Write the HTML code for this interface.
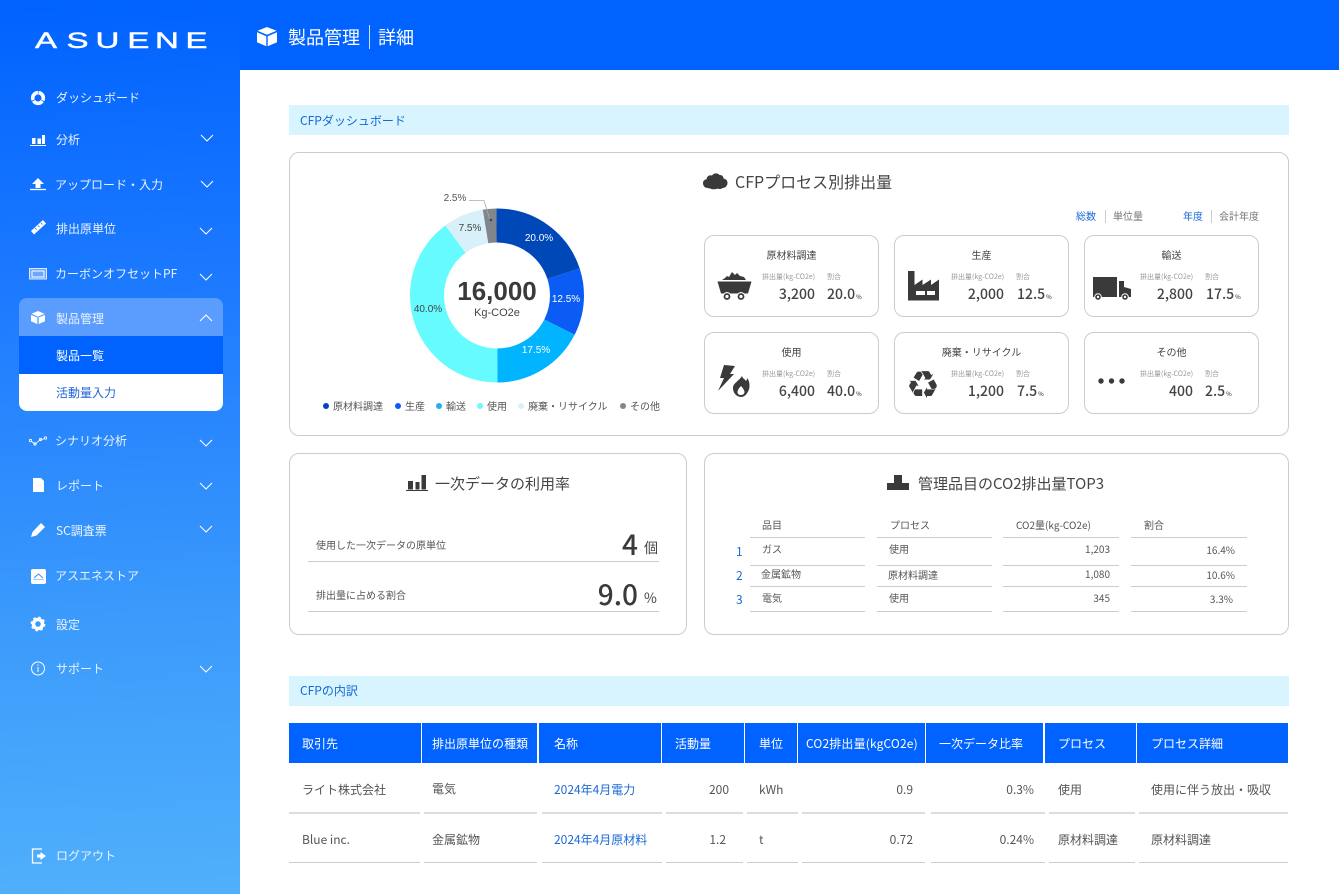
<!DOCTYPE html>
<html lang="ja"><head><meta charset="utf-8"><title>ASUENE</title>
<style>
*{box-sizing:border-box}
html,body{margin:0;padding:0}
body{width:1339px;height:894px;overflow:hidden;position:relative;background:#fff;font-family:"Liberation Sans","Noto Sans CJK JP",sans-serif;color:#444}
.t,.r,.c{position:absolute;line-height:20px;height:20px;white-space:nowrap;font-family:"Noto Sans CJK JP",sans-serif}
.r{text-align:right;width:200px}
.c{text-align:center}
.a{position:absolute}
#side{position:absolute;left:0;top:0;width:240px;height:894px;background:linear-gradient(178deg,#0062ff 0%,#1f7cff 35%,#3c9bfb 70%,#50b0fb 100%)}
.s{font-size:12px;color:#e9f3ff;margin-top:1px}
.card{position:absolute;border:1px solid #ccc;border-radius:10px;background:#fff}
.ln{position:absolute;height:1px;background:#ccc}
.lab{font-size:7px;color:#999}
.val{font-size:14px;font-weight:500;color:#444}
.ttl{font-size:10px;color:#444}
.th{position:absolute;top:723px;height:40px;background:#0062ff}
.h{font-size:12px;color:#fff;top:734px}
.d{font-size:12px;color:#555;margin-top:1px}
.b{color:#1a6ad8}
.p{font-size:10px;font-family:"Liberation Sans",sans-serif}
.leg{font-size:10px;color:#555;top:396px}
.dot{position:absolute;width:6px;height:6px;border-radius:3px;top:403px}
.m{font-size:10px;color:#555}
</style></head><body>

<div id="side"></div>
<div class="a" style="left:240px;top:0;width:1099px;height:70px;background:#0062ff"></div>

<svg class="a" style="left:0;top:0" width="240" height="70"><text transform="translate(34 48) scale(1.5 1)" x="0.7 21.7 41 62.300 80.700 101" fill="#fff" stroke="#fff" stroke-width=".45" font-family="Liberation Sans" font-size="22">ASUENE</text></svg>

<!-- active box -->
<div class="a" style="left:19px;top:298px;width:204px;height:38px;background:#5b9dff;border-radius:8px 8px 0 0"></div>
<div class="a" style="left:19px;top:336px;width:204px;height:38px;background:#0062ff"></div>
<div class="a" style="left:19px;top:374px;width:204px;height:37px;background:#fff;border-radius:0 0 8px 8px"></div>

<div class="t s" style="left:56px;top:87px">ダッシュボード</div>
<div class="t s" style="left:56px;top:129px">分析</div>
<div class="t s" style="left:55px;top:174px">アップロード・入力</div>
<div class="t s" style="left:56px;top:218px">排出原単位</div>
<div class="t s" style="left:55px;top:263px">カーボンオフセットPF</div>
<div class="t s" style="left:56px;top:308px">製品管理</div>
<div class="t s" style="left:56px;top:345px;color:#fff">製品一覧</div>
<div class="t s" style="left:56px;top:382px;color:#1f66d6">活動量入力</div>
<div class="t s" style="left:55px;top:430px">シナリオ分析</div>
<div class="t s" style="left:56px;top:475px">レポート</div>
<div class="t s" style="left:56px;top:520px">SC調査票</div>
<div class="t s" style="left:55px;top:565px">アスエネストア</div>
<div class="t s" style="left:56px;top:614px">設定</div>
<div class="t s" style="left:56px;top:658px">サポート</div>
<div class="t s" style="left:56px;top:845px">ログアウト</div>

<svg class="a" style="left:0;top:0" width="240" height="894" fill="none">
<g stroke="#fff" stroke-width="1.1">
<path d="M201 135l6 6 6-6M201 181l6 6 6-6M200 228l6 6 6-6M200 274l6 6 6-6M200 321l6-6 6 6M200 440l6 6 6-6M200 483l6 6 6-6M200 526l6 6 6-6M200 666l6 6 6-6"/>
</g>
<!-- dashboard -->
<circle cx="38" cy="98" r="5.300" stroke="#fff" stroke-width="3.600" stroke-dasharray="10.300 .8" transform="rotate(-85 38 98)"/>
<!-- bars -->
<path d="M32 138h3.500v6H32zM37.500 138.500H41v5.500h-3.500zM42 135h3v9h-3z" fill="#fff"/><path d="M30 145.500h16" stroke="#fff"/>
<!-- upload -->
<path d="M38 178l6 6h-3.500v4h-5v-4H32z" fill="#fff"/><path d="M30 189.500h16" stroke="#fff" stroke-width="1.300"/>
<!-- ruler -->
<path d="M31 231l12-11 3 3.500-12 11z" fill="#fff"/><path d="M35 228l1.500 1.500M38 225.500l1.500 1.500M41 223l1.500 1.500" stroke="#4d8ff0"/>
<!-- carbon card -->
<rect x="29.500" y="268.500" width="17" height="10.500" stroke="#dbe9ff" fill="#6ea6ff"/><rect x="32" y="271" width="12" height="6" stroke="#fff"/>
<!-- cube -->
<path d="M38 311l6.500 2.800-6.500 2.800-6.500-2.800z" fill="#fff"/><path d="M31 315v6.200l6.300 2.800v-6.600zM45 315v6.200l-6.300 2.800v-6.600z" fill="#fff"/>
<!-- scenario -->
<path d="M31 441l4 3 5-4 5-1.500" stroke="#fff" stroke-width=".8"/><circle cx="30.500" cy="440.500" r="1.200" stroke="#fff" stroke-width=".8"/><circle cx="35" cy="444" r="1.200" stroke="#fff" stroke-width=".8"/><circle cx="40.500" cy="439.500" r="1.200" stroke="#fff" stroke-width=".8"/><circle cx="45.500" cy="438" r="1.200" stroke="#fff" stroke-width=".8"/>
<!-- doc -->
<path d="M33 478h8l3 3v11H33z" fill="#fff"/>
<!-- pencil -->
<path d="M31 537l1.500-5 8.500-9 4 4-8.500 8.500z" fill="#fff"/>
<!-- store -->
<rect x="31" y="569" width="15" height="15" rx="2" fill="#fff"/><path d="M34 578l4.500-4 4.500 4" stroke="#3b8df5"/><path d="M33 579.500h11" stroke="#a7ccfa"/>
<!-- gear -->
<circle cx="38" cy="624" r="4.500" stroke="#fff" stroke-width="3.500"/><circle cx="38" cy="624" r="6.200" stroke="#fff" stroke-width="2.400" stroke-dasharray="2.400 2.470"/>
<!-- info -->
<circle cx="38" cy="668.500" r="6.500" stroke="#fff"/><path d="M38 667v5M38 664.500v1.300" stroke="#fff"/>
<!-- logout -->
<path d="M42 849h-9.500v14H42" stroke="#fff" stroke-width="1.300"/><path d="M37 854.500h3.500V852l5.500 4-5.500 4v-2.500H37z" fill="#fff"/>
</svg>

<!-- header -->
<svg class="a" style="left:257px;top:26px" width="21" height="21"><path d="M10 1l9.500 3.800-9.500 4-9.500-4z" fill="#fff"/><path d="M0 6.300v10l9.300 4V10.300zM20 6.300v10l-9.300 4V10.300z" fill="#fff"/></svg>
<div class="t" style="left:288px;top:27px;font-size:18px;color:#fff">製品管理</div>
<div class="a" style="left:369px;top:25px;width:1px;height:24px;background:#cfe1ff"></div>
<div class="t" style="left:378px;top:27px;font-size:18px;color:#fff">詳細</div>

<!-- section bars -->
<div class="a" style="left:289px;top:105px;width:1000px;height:30px;background:#d8f4ff"></div>
<div class="t" style="left:300px;top:111px;font-size:12px;color:#1668d8">CFPダッシュボード</div>
<div class="a" style="left:289px;top:676px;width:1000px;height:30px;background:#d8f4ff"></div>
<div class="t" style="left:300px;top:681px;font-size:12px;color:#1668d8">CFPの内訳</div>

<!-- cards -->
<div class="card" style="left:289px;top:152px;width:1000px;height:284px"></div>
<div class="card" style="left:289px;top:453px;width:398px;height:182px"></div>
<div class="card" style="left:704px;top:453px;width:585px;height:182px"></div>

<!-- donut -->
<svg class="a" style="left:400px;top:190px" width="200" height="200" fill="none">
<g transform="rotate(-90 97 105.500)" stroke-width="34">
<circle cx="97" cy="105.500" r="70" pathLength="100" stroke="#0047b8" stroke-dasharray="20 80"/>
<circle cx="97" cy="105.500" r="70" pathLength="100" stroke="#0a5cf5" stroke-dasharray="12.500 87.500" stroke-dashoffset="-20"/>
<circle cx="97" cy="105.500" r="70" pathLength="100" stroke="#00b4ff" stroke-dasharray="17.500 82.500" stroke-dashoffset="-32.500"/>
<circle cx="97" cy="105.500" r="70" pathLength="100" stroke="#66fbff" stroke-dasharray="40 60" stroke-dashoffset="-50"/>
<circle cx="97" cy="105.500" r="70" pathLength="100" stroke="#d8f0fa" stroke-dasharray="7.500 92.500" stroke-dashoffset="-90"/>
<circle cx="97" cy="105.500" r="70" pathLength="100" stroke="#80868b" stroke-dasharray="2.500 97.500" stroke-dashoffset="-97.500"/>
</g>
<path d="M69 10.500h15l5.500 18" stroke="#aaa" stroke-width=".8"/><circle cx="91" cy="30" r="1.300" fill="#444"/>
</svg>
<div class="c p" style="left:519px;width:40px;top:229px;color:#fff">20.0%</div>
<div class="c p" style="left:546px;width:40px;top:290px;color:#fff">12.5%</div>
<div class="c p" style="left:516px;width:40px;top:341px;color:#fff">17.5%</div>
<div class="c p" style="left:408px;width:40px;top:300px;color:#444">40.0%</div>
<div class="c p" style="left:450px;width:40px;top:219px;color:#444">7.5%</div>
<div class="c p" style="left:435px;width:40px;top:189px;color:#555">2.5%</div>
<div class="c" style="left:447px;width:100px;top:281px;font:bold 26px/20px 'Liberation Sans',sans-serif;color:#3a3a3a">16,000</div>
<div class="c" style="left:447px;width:100px;top:303px;font:11px/20px 'Liberation Sans',sans-serif;color:#444">Kg-CO2e</div>

<!-- legend -->
<i class="dot" style="left:323px;background:#0047b8"></i><div class="t leg" style="left:333px">原材料調達</div>
<i class="dot" style="left:395px;background:#0a5cf5"></i><div class="t leg" style="left:405px">生産</div>
<i class="dot" style="left:436px;background:#1fb0f5"></i><div class="t leg" style="left:446px">輸送</div>
<i class="dot" style="left:477px;background:#66fbff"></i><div class="t leg" style="left:487px">使用</div>
<i class="dot" style="left:518px;background:#d8f0fa"></i><div class="t leg" style="left:528px">廃棄・リサイクル</div>
<i class="dot" style="left:620px;background:#80868b"></i><div class="t leg" style="left:630px">その他</div>

<!-- CFP heading -->
<svg class="a" style="left:703px;top:172px" width="25" height="18"><path d="M5 16C1 16 0 13 0 11c0-2 1.500-3.500 3.500-3.800C4 4 6.500 2.500 9 3.500 10.500 1 14.500.500 16.500 3c2.500-.3 4 1.500 4 3.500 2.500.5 4 2 4 4.500s-2 5-5 5c-1 1-3 1.500-5 .5-2 1-6 1-7 0-.8.200-1.500-.2-2.500-.5z" fill="#3a3a3a"/></svg>
<div class="t" style="left:735px;top:171px;font-size:16px;color:#444">CFPプロセス別排出量</div>

<!-- toggle -->
<div class="t m b" style="left:1076px;top:206px;color:#1a6ad8">総数</div>
<div class="a" style="left:1105px;top:210px;width:1px;height:13px;background:#ccc"></div>
<div class="t m" style="left:1113px;top:206px;color:#777">単位量</div>
<div class="t m" style="left:1183px;top:206px;color:#1a6ad8">年度</div>
<div class="a" style="left:1211px;top:210px;width:1px;height:13px;background:#ccc"></div>
<div class="t m" style="left:1219px;top:206px;color:#777">会計年度</div>

<!-- small cards -->
<div class="card" style="left:704px;top:235px;width:175px;height:82px"></div>
<div class="card" style="left:894px;top:235px;width:175px;height:82px"></div>
<div class="card" style="left:1084px;top:235px;width:175px;height:82px"></div>
<div class="card" style="left:704px;top:332px;width:175px;height:82px"></div>
<div class="card" style="left:894px;top:332px;width:175px;height:82px"></div>
<div class="card" style="left:1084px;top:332px;width:175px;height:82px"></div>

<div class="c ttl" style="left:704px;width:175px;top:245px">原材料調達</div>
<div class="c ttl" style="left:894px;width:175px;top:245px">生産</div>
<div class="c ttl" style="left:1084px;width:175px;top:245px">輸送</div>
<div class="c ttl" style="left:704px;width:175px;top:342px">使用</div>
<div class="c ttl" style="left:894px;width:175px;top:342px">廃棄・リサイクル</div>
<div class="c ttl" style="left:1084px;width:175px;top:342px">その他</div>

<div class="t lab" style="left:762px;top:267px">排出量(kg-CO2e)</div><div class="t lab" style="left:827px;top:267px">割合</div>
<div class="t lab" style="left:951px;top:267px">排出量(kg-CO2e)</div><div class="t lab" style="left:1016px;top:267px">割合</div>
<div class="t lab" style="left:1140px;top:267px">排出量(kg-CO2e)</div><div class="t lab" style="left:1205px;top:267px">割合</div>
<div class="t lab" style="left:762px;top:364px">排出量(kg-CO2e)</div><div class="t lab" style="left:827px;top:364px">割合</div>
<div class="t lab" style="left:951px;top:364px">排出量(kg-CO2e)</div><div class="t lab" style="left:1016px;top:364px">割合</div>
<div class="t lab" style="left:1140px;top:364px">排出量(kg-CO2e)</div><div class="t lab" style="left:1205px;top:364px">割合</div>

<div class="r val" style="left:615px;top:284px">3,200</div><div class="t val" style="left:827px;top:284px">20.0<span style="font-size:6px;margin-left:1px">%</span></div>
<div class="r val" style="left:804px;top:284px">2,000</div><div class="t val" style="left:1017px;top:284px">12.5<span style="font-size:6px;margin-left:1px">%</span></div>
<div class="r val" style="left:993px;top:284px">2,800</div><div class="t val" style="left:1206px;top:284px">17.5<span style="font-size:6px;margin-left:1px">%</span></div>
<div class="r val" style="left:615px;top:381px">6,400</div><div class="t val" style="left:827px;top:381px">40.0<span style="font-size:6px;margin-left:1px">%</span></div>
<div class="r val" style="left:804px;top:381px">1,200</div><div class="t val" style="left:1017px;top:381px">7.5<span style="font-size:6px;margin-left:1px">%</span></div>
<div class="r val" style="left:993px;top:381px">400</div><div class="t val" style="left:1205px;top:381px">2.5<span style="font-size:6px;margin-left:1px">%</span></div>

<!-- icons for small cards -->
<svg class="a" style="left:700px;top:260px" width="450" height="145" fill="#3a3a3a">
<!-- cart -->
<path d="M22 20l3-2 2-2 2 1 3-5 3 3 2-2 3 3 4 1 2 3z"/>
<path d="M17.500 21.500h34l-3.500 12H21z"/>
<circle cx="27" cy="36.500" r="4.500" fill="#fff"/><circle cx="41" cy="36.500" r="4.500" fill="#fff"/>
<circle cx="27" cy="36.500" r="2.500" fill="#fff" stroke="#3a3a3a" stroke-width="1.800"/><circle cx="41" cy="36.500" r="2.500" fill="#fff" stroke="#3a3a3a" stroke-width="1.800"/>
<!-- factory -->
<path fill-rule="evenodd" d="M208 11h6.500v14l8-5.500v5.500l8.500-5.500v5.500l8-5.500v21h-31zM216 31v4h9v-4zM227 31v4h8v-4z"/>
<!-- truck -->
<path d="M393 17h24v20h-24zM419 21h5v6l7 2v8h-12z"/>
<circle cx="398" cy="37" r="3.800" fill="#fff"/><circle cx="425" cy="37" r="3.800" fill="#fff"/>
<circle cx="398" cy="37" r="2" fill="#fff" stroke="#3a3a3a" stroke-width="1.600"/><circle cx="425" cy="37" r="2" fill="#fff" stroke="#3a3a3a" stroke-width="1.600"/>
<!-- bolt -->
<path d="M24 105l11 1-5 8h4l-16 17 6-13h-4z"/>
<!-- flame -->
<path fill-rule="evenodd" d="M42 116c1 3 3 3 4 5 1-1 1-2 1-3 2 2 2.500 5 2.500 8 0 5-4 11-8 11-5 0-8.500-4-8.500-9 0-5 5-6 9-12zM41 126c-2 2-3.500 4-3.500 6s1.500 3 3.500 3 3.500-1.500 3.500-3-1.500-4-3.500-6z"/>
<!-- dots -->
<circle cx="401" cy="121" r="2.700"/><circle cx="411.500" cy="121" r="2.700"/><circle cx="422" cy="121" r="2.700"/>
</svg>
<div class="c" style="left:903px;width:40px;top:370px;height:30px;font:38px/30px 'DejaVu Sans',sans-serif;color:#3a3a3a">♻</div>

<!-- card 2 -->
<svg class="a" style="left:406px;top:475px" width="23" height="17" fill="#3a3a3a"><path d="M2 6h5v8.500H2zM9.500 7h4v7.500h-4zM15.500 0h4.500v14.500h-4.500z"/><path d="M0 15h22v1H0z"/></svg>
<div class="t" style="left:435px;top:474px;font-size:15px;color:#444">一次データの利用率</div>
<div class="t" style="left:316px;top:535px;font-size:10px;color:#555">使用した一次データの原単位</div>
<div class="r" style="left:438px;top:534px;font-size:28px;font-weight:500;color:#3a3a3a">4</div>
<div class="t" style="left:644px;top:538px;font-size:14px;color:#444">個</div>
<div class="ln" style="left:308px;top:561px;width:351px"></div>
<div class="t" style="left:316px;top:585px;font-size:10px;color:#555">排出量に占める割合</div>
<div class="r" style="left:438px;top:584px;font-size:28px;font-weight:500;color:#3a3a3a">9.0</div>
<div class="t" style="left:644px;top:588px;font-size:14px;color:#444">%</div>
<div class="ln" style="left:308px;top:611px;width:351px"></div>

<!-- card 3 -->
<svg class="a" style="left:887px;top:474px" width="23" height="17" fill="#3a3a3a"><path d="M0 9h7V1h8v8h7v7H0z"/></svg>
<div class="t" style="left:918px;top:474px;font-size:15px;color:#444">管理品目のCO2排出量TOP3</div>

<div class="t m" style="left:762px;top:515px">品目</div><div class="t m" style="left:890px;top:515px">プロセス</div><div class="t m" style="left:1016px;top:515px">CO2量(kg-CO2e)</div><div class="t m" style="left:1144px;top:515px">割合</div>
<div class="ln" style="left:750px;top:537px;width:115px"></div><div class="ln" style="left:877px;top:537px;width:115px"></div><div class="ln" style="left:1003px;top:537px;width:116px"></div><div class="ln" style="left:1131px;top:537px;width:116px"></div>
<div class="ln" style="left:750px;top:565px;width:115px"></div><div class="ln" style="left:877px;top:565px;width:115px"></div><div class="ln" style="left:1003px;top:565px;width:116px"></div><div class="ln" style="left:1131px;top:565px;width:116px"></div>
<div class="ln" style="left:750px;top:586px;width:115px"></div><div class="ln" style="left:877px;top:586px;width:115px"></div><div class="ln" style="left:1003px;top:586px;width:116px"></div><div class="ln" style="left:1131px;top:586px;width:116px"></div>
<div class="ln" style="left:750px;top:611px;width:115px"></div><div class="ln" style="left:877px;top:611px;width:115px"></div><div class="ln" style="left:1003px;top:611px;width:116px"></div><div class="ln" style="left:1131px;top:611px;width:116px"></div>

<div class="t" style="left:736px;top:542px;font-size:12px;color:#1a6ad8">1</div><div class="t" style="left:736px;top:566px;font-size:12px;color:#1a6ad8">2</div><div class="t" style="left:736px;top:590px;font-size:12px;color:#1a6ad8">3</div>
<div class="t m" style="left:762px;top:539px">ガス</div><div class="t m" style="left:889px;top:539px">使用</div><div class="r m" style="left:910px;top:539px">1,203</div><div class="r m" style="left:1035px;top:540px">16.4%</div>
<div class="t m" style="left:761px;top:564px">金属鉱物</div><div class="t m" style="left:888px;top:565px">原材料調達</div><div class="r m" style="left:910px;top:564px">1,080</div><div class="r m" style="left:1035px;top:565px">10.6%</div>
<div class="t m" style="left:762px;top:588px">電気</div><div class="t m" style="left:889px;top:588px">使用</div><div class="r m" style="left:910px;top:588px">345</div><div class="r m" style="left:1033px;top:589px">3.3%</div>

<!-- main table -->
<div class="th" style="left:289px;width:132px"></div><div class="th" style="left:422px;width:115px"></div><div class="th" style="left:539px;width:122px"></div><div class="th" style="left:662px;width:82px"></div><div class="th" style="left:745px;width:52px"></div><div class="th" style="left:798px;width:127px"></div><div class="th" style="left:926px;width:117px"></div><div class="th" style="left:1045px;width:91px"></div><div class="th" style="left:1137px;width:151px"></div>

<div class="t h" style="left:302px">取引先</div><div class="t h" style="left:432px">排出原単位の種類</div><div class="t h" style="left:554px">名称</div><div class="t h" style="left:675px">活動量</div><div class="t h" style="left:759px">単位</div><div class="t h" style="left:806px;letter-spacing:.15px">CO2排出量(kgCO2e)</div><div class="t h" style="left:939px">一次データ比率</div><div class="t h" style="left:1058px">プロセス</div><div class="t h" style="left:1151px">プロセス詳細</div>

<div class="t d" style="left:302px;top:779px">ライト株式会社</div><div class="t d" style="left:432px;top:778px">電気</div><div class="t d b" style="left:554px;top:779px;color:#1a6ad8">2024年4月電力</div><div class="r d" style="left:529px;top:779px">200</div><div class="t d" style="left:759px;top:779px">kWh</div><div class="r d" style="left:713px;top:779px">0.9</div><div class="r d" style="left:834px;top:779px">0.3%</div><div class="t d" style="left:1058px;top:779px">使用</div><div class="t d" style="left:1151px;top:779px">使用に伴う放出・吸収</div>

<div class="t d" style="left:302px;top:829px">Blue inc.</div><div class="t d" style="left:432px;top:829px">金属鉱物</div><div class="t d" style="left:554px;top:829px;color:#1a6ad8">2024年4月原材料</div><div class="r d" style="left:526px;top:829px">1.2</div><div class="t d" style="left:759px;top:829px">t</div><div class="r d" style="left:713px;top:829px">0.72</div><div class="r d" style="left:834px;top:829px">0.24%</div><div class="t d" style="left:1058px;top:829px">原材料調達</div><div class="t d" style="left:1151px;top:829px">原材料調達</div>

<svg class="a" style="left:0;top:800px" width="1339" height="70" fill="#ddd">
<g><path d="M289 12h131v2H289zM424 12h113v2H424zM542 12h120v2H542zM666 12h77v2h-77zM747 12h51v2h-51zM802 12h123v2H802zM931 12h114v2H931zM1049 12h86v2h-86zM1139 12h149v2h-149z"/></g>
<g fill="#ccc"><path d="M289 62h131v1H289zM424 62h113v1H424zM542 62h120v1H542zM666 62h77v1h-77zM747 62h51v1h-51zM802 62h123v1H802zM931 62h114v1H931zM1049 62h86v1h-86zM1139 62h149v1h-149z"/></g>
</svg>

</body></html>
